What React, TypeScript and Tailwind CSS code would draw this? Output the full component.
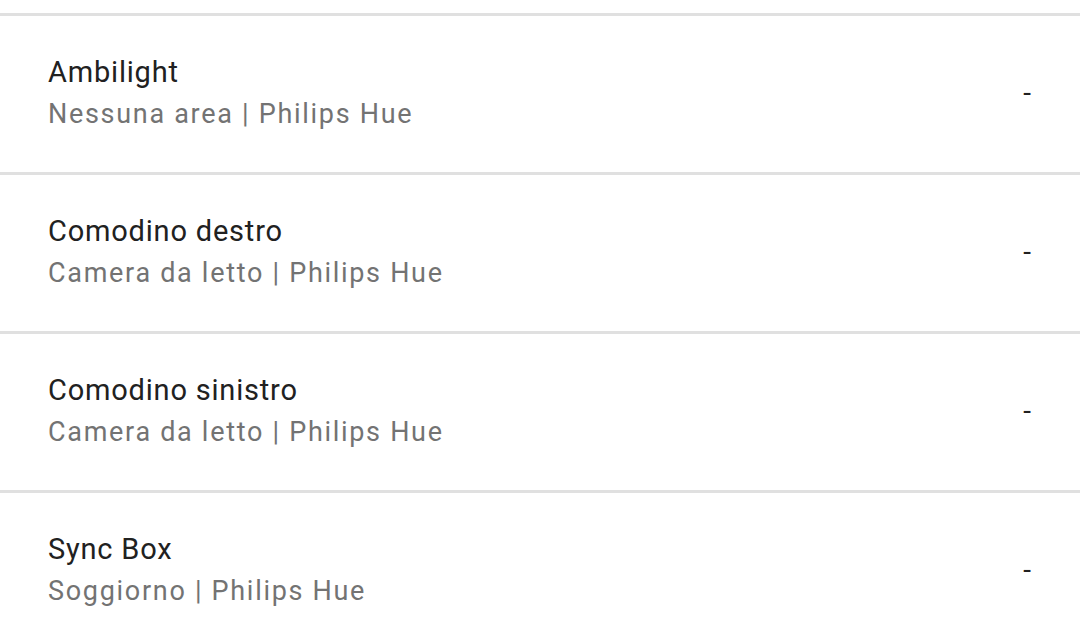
const devices = [
  { name: "Ambilight", area: "Nessuna area" },
  { name: "Comodino destro", area: "Camera da letto" },
  { name: "Comodino sinistro", area: "Camera da letto" },
  { name: "Sync Box", area: "Soggiorno" },
]

export default function App() {
  return (
    <div className="h-[641px] w-[1080px] overflow-hidden bg-white font-['Roboto',sans-serif]">
      <div className="h-[16px] border-b-[3px] border-[#e0e0e0]" />
      {devices.map((device) => (
        <div
          key={device.name}
          className="flex h-[159px] items-center border-b-[3px] border-[#e0e0e0] pb-[2px] pl-12 pr-[49px]"
        >
          <div className="flex min-w-0 flex-1 flex-col">
            <span className="text-[29px] leading-[42px] tracking-[0.8px] text-[#212121]">
              {device.name}
            </span>
            <span className="text-[27px] leading-[42px] tracking-[1.7px] text-[#737373]">
              {device.area} | Philips Hue
            </span>
          </div>
          <span className="text-[28px] leading-[42px] text-[#212121]">-</span>
        </div>
      ))}
    </div>
  )
}
